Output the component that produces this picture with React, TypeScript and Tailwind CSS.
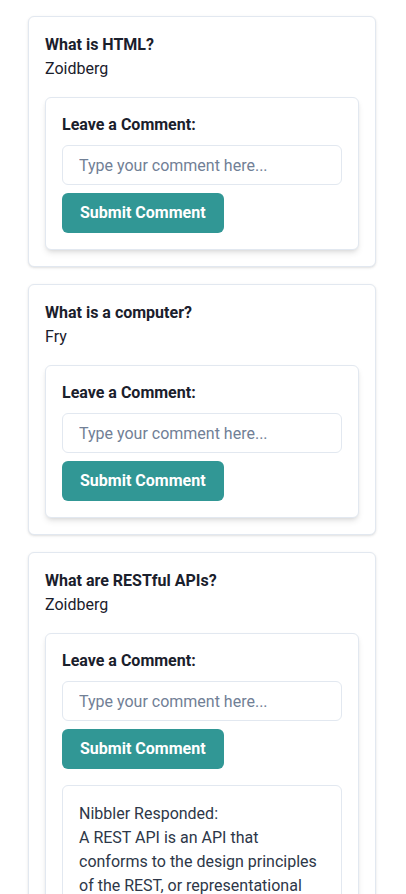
import React from "react";

type Q = { title: string; author: string; responses?: { who: string; lines: string[] }[] };

const questions: Q[] = [
  { title: "What is HTML?", author: "Zoidberg" },
  { title: "What is a computer?", author: "Fry" },
  {
    title: "What are RESTful APIs?",
    author: "Zoidberg",
    responses: [
      {
        who: "Nibbler",
        lines: [
          "A REST API is an API that",
          "conforms to the design principles",
          "of the REST, or representational",
          "state transfer architectural style.",
        ],
      },
    ],
  },
];

function Card({ q }: { q: Q }) {
  return (
    <div className="mb-[17px] rounded-md border border-[#e2e8f0] bg-white p-4 shadow-sm">
      <h2 className="text-base font-bold leading-6 text-[#1a202c]">{q.title}</h2>
      <p className="text-base leading-6 text-[#1a202c]">{q.author}</p>
      <div className="mt-4 rounded-md border border-[#e2e8f0] bg-white px-4 pt-[15px] pb-4 shadow-md">
        <label className="mb-2 block text-base font-bold leading-6 text-[#1a202c]">Leave a Comment:</label>
        <input
          className="block h-10 w-full rounded-md border border-[#e2e8f0] px-4 text-base text-[#1a202c] outline-none placeholder:text-[#718096]"
          placeholder="Type your comment here..."
        />
        <button className="mt-2 h-10 rounded-md bg-[#319795] px-[18px] text-base font-bold text-white">
          Submit Comment
        </button>
        {q.responses?.map((r, i) => (
          <div key={i} className="mt-4 rounded-md border border-[#e2e8f0] p-4 text-base leading-6 text-[#2d3748]">
            <div className="whitespace-nowrap">{r.who} Responded:</div>
            {r.lines.map((l, j) => (
              <div key={j} className="whitespace-nowrap">{l}</div>
            ))}
          </div>
        ))}
      </div>
    </div>
  );
}

export default function App() {
  return (
    <div className="min-h-screen bg-white pt-4" style={{ fontFamily: "Roboto, 'Noto Sans', sans-serif" }}>
      <div className="ml-[28px] w-[348px]">
        {questions.map((q, i) => (
          <Card key={i} q={q} />
        ))}
      </div>
    </div>
  );
}
